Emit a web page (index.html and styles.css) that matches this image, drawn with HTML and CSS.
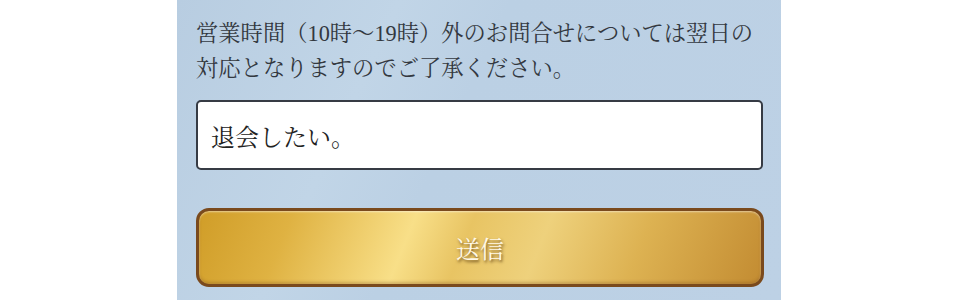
FILE: index.html
```html
<!DOCTYPE html>
<html lang="ja">
<head>
<meta charset="utf-8">
<link rel="stylesheet" href="styles.css">
</head>
<body>
<div class="panel">
  <p class="note">営業時間（10時〜19時）外のお問合せについては翌日の<br>対応となりますのでご了承ください。</p>
  <div class="field">退会したい。</div>
  <button class="send" type="button">送信</button>
</div>
</body>
</html>
```
FILE: styles.css
```css
html, body {
  margin: 0;
  padding: 0;
  background: #ffffff;
}
.panel {
  margin-left: 177px;
  width: 604px;
  height: 300px;
  box-sizing: border-box;
  padding: 16px 18px 0 19px;
  background: linear-gradient(115deg, #b8cde1 0%, #c1d5e7 30%, #bbd0e4 45%, #bdd1e5 100%);
  font-family: "Liberation Serif", "Noto Serif CJK JP", "Noto Sans CJK JP", serif;
  display: flex;
  flex-direction: column;
}
.note {
  margin: 0;
  font-size: 22.3px;
  line-height: 35px;
  color: #333840;
  white-space: nowrap;
}
.field {
  margin-top: 14px;
  height: 70px;
  box-sizing: border-box;
  border: 2px solid #363b44;
  border-radius: 5px;
  background: #ffffff;
  padding-left: 13px;
  display: flex;
  align-items: center;
  font-size: 24px;
  color: #222;
}
.send {
  margin-top: 38px;
  height: 79px;
  width: 568px;
  box-sizing: border-box;
  border: 3px solid #7a4a1d;
  border-radius: 13px;
  background: linear-gradient(112deg, #d09d28 0%, #dfb242 16%, #f0d070 30%, #f8df88 37%, #e8c463 47%, #eed17c 60%, #ddb252 77%, #c38c32 100%);
  box-shadow: inset 0 1px 2px rgba(255,255,255,0.5), inset 0 -2px 3px rgba(120,70,20,0.3);
  font-family: "Liberation Serif", "Noto Serif CJK JP", "Noto Sans CJK JP", serif;
  font-size: 24px;
  color: #fff8e6;
  text-shadow: 1px 2px 3px rgba(80,50,10,0.8);
  padding: 0;
  cursor: pointer;
}
```
